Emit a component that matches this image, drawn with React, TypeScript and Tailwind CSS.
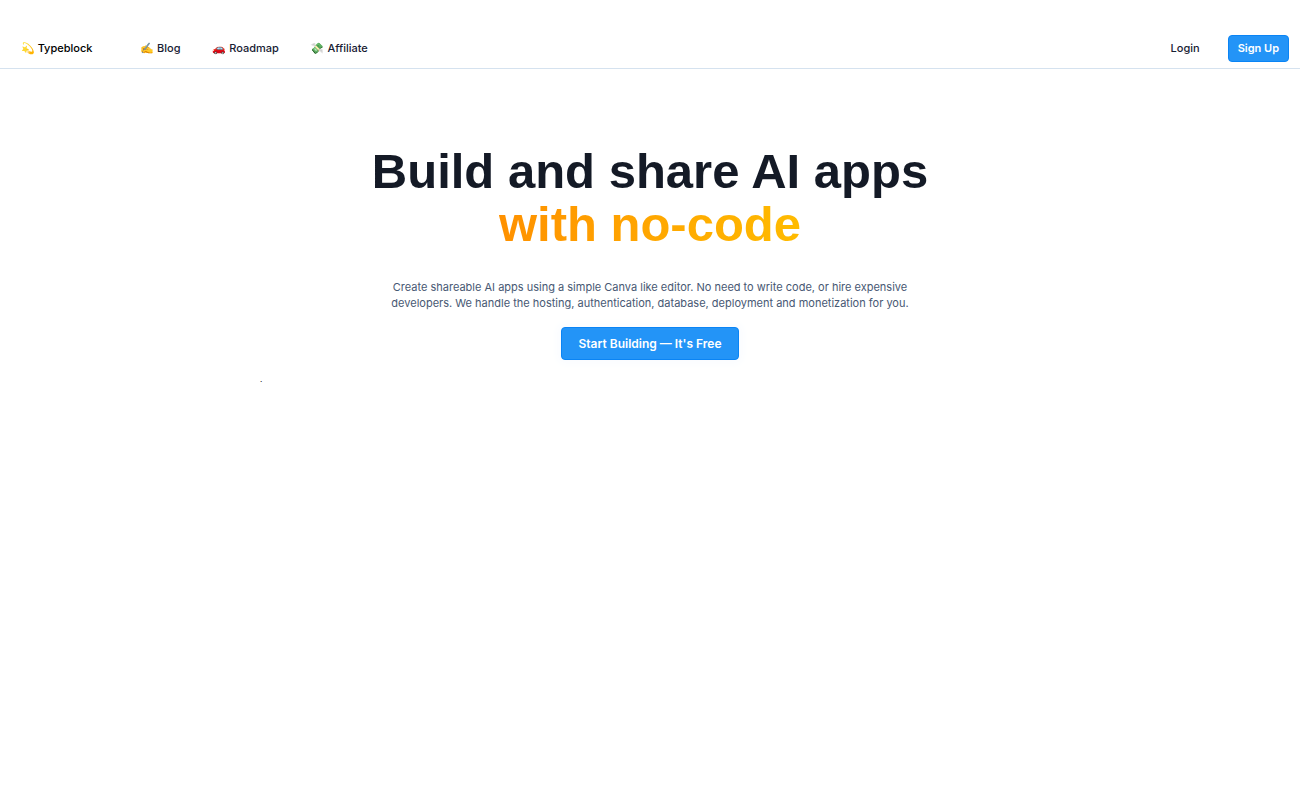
const navLinks = [
  { icon: "✍️", label: "Blog", href: "#blog" },
  { icon: "🚗", label: "Roadmap", href: "#roadmap" },
  { icon: "💸", label: "Affiliate", href: "#affiliate" },
];

function Navbar() {
  return (
    <header className="border-b border-[#d5e2ef] px-[11px] pt-7">
      <div className="flex h-10 items-center justify-between text-[11px] font-medium">
        <div className="flex items-center">
          <a href="#home" className="px-[10px] text-black">
            💫 Typeblock
          </a>
          <nav className="ml-7 flex items-center gap-3">
            {navLinks.map((link) => (
              <a key={link.label} href={link.href} className="px-[10px]">
                {link.icon} {link.label}
              </a>
            ))}
          </nav>
        </div>
        <div className="flex items-center gap-7">
          <a href="#login">Login</a>
          <button
            type="button"
            className="h-[27px] rounded border border-[#0a84f5] bg-[#2394f7] px-[9px] font-semibold text-white"
          >
            Sign Up
          </button>
        </div>
      </div>
    </header>
  );
}

function Hero() {
  return (
    <section className="mx-auto max-w-[780px] pt-[76px]">
      <div className="flex flex-col items-center text-center">
        <h1 className="font-['Liberation_Sans',Arial,sans-serif] text-[49px] leading-[53px] font-bold text-[#141a26]">
          Build and share AI apps
          <br />
          <span className="bg-linear-to-r from-[#ff9100] to-[#ffbb00] bg-clip-text text-transparent">
            with no-code
          </span>
        </h1>
        <p className="mt-7 max-w-[520px] text-[11px] leading-4 text-[#475873]">
          Create shareable AI apps using a simple Canva like editor. No need to write code, or hire
          expensive developers. We handle the hosting, authentication, database, deployment and
          monetization for you.
        </p>
        <button
          type="button"
          className="mt-4 h-[33px] rounded border border-[#0a84f5] bg-[#2394f7] px-[17px] text-xs font-semibold text-white shadow-[0_0_8px_4px_#fafcff]"
        >
          Start Building — It's Free
        </button>
      </div>
      <p className="mt-[15px] text-[8px] leading-2 text-black">.</p>
    </section>
  );
}

export default function App() {
  return (
    <div className="min-h-screen bg-white font-['Inter','Noto_Color_Emoji',sans-serif] text-[#172033]">
      <Navbar />
      <main>
        <Hero />
      </main>
    </div>
  );
}
